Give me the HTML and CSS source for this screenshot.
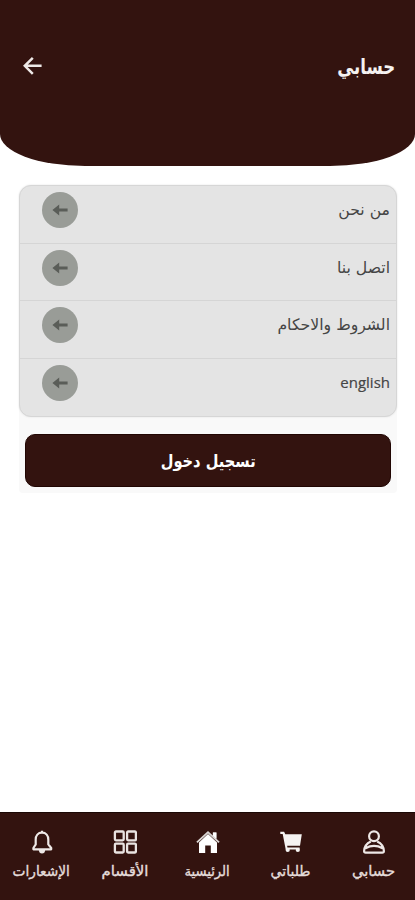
FILE: index.html
```html
<!DOCTYPE html>
<html lang="ar" dir="rtl">
<head>
<meta charset="utf-8">
<title>حسابي</title>
<link rel="stylesheet" href="styles.css">
</head>
<body>
<svg class="defs" width="0" height="0"><symbol id="go" viewBox="0 0 16 14"><path d="M15.600 5.600v2.800H7.200v4.200L.4 7l6.800-5.600v4.200z" fill="#5a5d58"/></symbol></svg>
<header class="header">
  <h1 class="title"><span class="fit">حسابي</span></h1>
  <svg class="back" viewBox="0 0 20 20"><path d="M18.600 9.800H2.500M9.800 1.800 1.800 9.800l8 8" fill="none" stroke="#eee9e7" stroke-width="2.500"/></svg>
</header>
<main class="main">
  <ul class="menu">
    <li class="row"><span class="label">من نحن</span><span class="circle"><svg><use href="#go"/></svg></span></li>
    <li class="row"><span class="label">اتصل بنا</span><span class="circle"><svg><use href="#go"/></svg></span></li>
    <li class="row"><span class="label">الشروط والاحكام</span><span class="circle"><svg><use href="#go"/></svg></span></li>
    <li class="row"><span class="label latin">english</span><span class="circle"><svg><use href="#go"/></svg></span></li>
  </ul>
  <button class="login"><span class="fit">تسجيل دخول</span></button>
</main>
<nav class="nav">
  <a class="item account"><svg viewBox="0 0 24 24"><g fill="none" stroke="#eee8e6" stroke-width="2.200"><circle cx="12" cy="6.200" r="4.900"/><path d="M8.800 11.400C4.800 13.200 2.300 17 2.100 21q0 1.700 1.600 1.700h16.600q1.600 0 1.600-1.700c-.2-4-2.700-7.800-6.700-9.600M3.500 18.300Q12 13.600 20.500 18.300"/></g></svg><span class="fit">حسابي</span></a>
  <a class="item orders"><svg viewBox="0 0 24 24"><path d="M1.300 1.800h3.800l1.200 2.400h16.500l-1.800 11.600H8.200l.2 1.600h12.200v2H6.700L3.700 3.900H1.300z" fill="#f5f3f2"/><circle cx="8.700" cy="20" r="2.100" fill="#f5f3f2"/><circle cx="18.800" cy="20" r="2.100" fill="#f5f3f2"/></svg><span class="fit">طلباتي</span></a>
  <a class="item home"><svg viewBox="0 0 24 24"><path d="M12 .9l4.800 4.500V2.400h3.600v6.300l3.300 3.100-1.300 1.300L12 3.400 1.600 13.100.3 11.800z" fill="#d9d5d3"/><path d="M12 4.100l9 8.400V23h-6.200v-7.500H9.200V23H3V12.500z" fill="#fff"/><path d="M17 2.400h3.400v6.300L17 5.500z" fill="#fff"/></svg><span class="fit">الرئيسية</span></a>
  <a class="item sections"><svg viewBox="0 0 24 24"><g fill="none" stroke="#e9e3e1" stroke-width="2.300"><rect x="1.900" y="1.500" width="8.800" height="8.800" rx="1"/><rect x="14.100" y="1.500" width="8.800" height="8.800" rx="1"/><rect x="1.900" y="13.700" width="8.800" height="8.800" rx="1"/><rect x="14.100" y="13.700" width="8.800" height="8.800" rx="1"/></g></svg><span class="fit">الأقسام</span></a>
  <a class="item alerts"><svg viewBox="0 0 24 24"><path d="M12 .7v2M12 2.600c-4 0-6.300 3-6.300 7v4.800L3.400 18v1.300h17.800V18l-2.900-3.600V9.600c0-4-2.300-7-6.300-7z" fill="none" stroke="#eee8e6" stroke-width="2.200" stroke-linejoin="round"/><path d="M8.800 20h6.400q-.3 3.500-3.200 3.500T8.800 20z" fill="#eee8e6"/></svg><span class="fit">الإشعارات</span></a>
</nav>
</body>
</html>
```
FILE: styles.css
```css
* { box-sizing: border-box; }
body { margin: 0; height: 900px; display: flex; flex-direction: column; background: #fff; font-family: "DejaVu Sans", sans-serif; overflow: hidden; }
.defs { position: absolute; }
.header { height: 166px; flex: none; background: #33130f; border-radius: 0 0 85px 85px / 0 0 32px 32px; display: flex; justify-content: space-between; align-items: flex-start; padding: 50px 20px 0 23px; }
.title { margin: 0; font-size: 21.5px; line-height: 34px; color: #f5f2f1; font-weight: 700; }
.fit { display: inline-block; white-space: nowrap; }
.title .fit { transform: scaleX(.77); transform-origin: right center; }
.back { width: 20px; height: 20px; margin-top: 6px; }
.main { width: 378px; margin: 19px 18px 0 19px; background: #f9f9f9; height: 308px; border-radius: 12px 12px 4px 4px; }
.menu { list-style: none; margin: 0; padding: 0; height: 232px; border: 1px solid #d6d6d6; border-radius: 12px; background: #e4e4e4; overflow: hidden; box-shadow: 0 0 2px #e0e0e0; }
.row { height: 57.6px; display: flex; justify-content: space-between; align-items: flex-start; padding: 6px 6px 0 22px; border-bottom: 1px solid #d5d5d5; }
.row:last-child { border-bottom: 0; }
.label { font-size: 15.7px; line-height: 36px; color: #454545; white-space: nowrap; }
.latin { font-family: "Open Sans", sans-serif; font-size: 15px; line-height: 35px; -webkit-text-stroke: .2px; }
.circle { width: 36px; height: 36px; border-radius: 50%; background: #999c97; display: flex; align-items: center; justify-content: center; }
.circle svg { width: 16px; height: 14px; }
.login { display: block; width: 366px; height: 53px; margin: 17px 6px 0; border: 1px solid #210603; border-radius: 10px; background: #33130f; color: #fff; font: 700 17px/36px "DejaVu Sans", sans-serif; padding: 0; }
.login .fit { transform: scaleX(.86); }
.nav { margin-top: auto; height: 88px; background: #33130f; border-top: 1px solid #1b0805; display: flex; padding-top: 17px; }
.item { flex: 1; display: flex; flex-direction: column; align-items: center; color: #e5dddb; font-size: 14px; line-height: 20px; gap: 7px; -webkit-text-stroke: .35px; }
.item svg { width: 24px; height: 24px; }
.account .fit { transform: scaleX(1.05); }
.home .fit { transform: scaleX(.94); }
.sections .fit { transform: scaleX(1.07); }
.alerts .fit { transform: scaleX(.98); }
```
